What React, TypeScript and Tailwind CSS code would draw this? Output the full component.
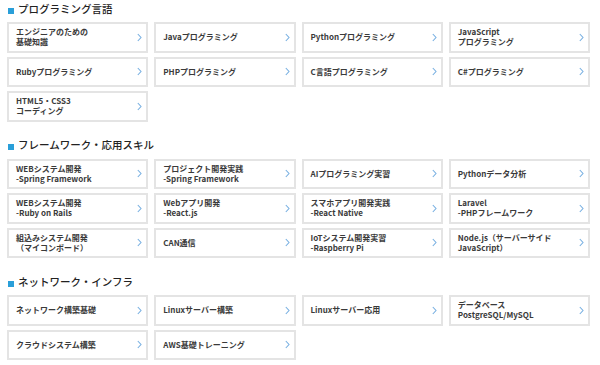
import React from "react";

type Section = { title: string; items: string[][] };

const sections: Section[] = [
  {
    title: "プログラミング言語",
    items: [
      ["エンジニアのための", "基礎知識"],
      ["Javaプログラミング"],
      ["Pythonプログラミング"],
      ["JavaScript", "プログラミング"],
      ["Rubyプログラミング"],
      ["PHPプログラミング"],
      ["C言語プログラミング"],
      ["C#プログラミング"],
      ["HTML5・CSS3", "コーディング"],
    ],
  },
  {
    title: "フレームワーク・応用スキル",
    items: [
      ["WEBシステム開発", "-Spring Framework"],
      ["プロジェクト開発実践", "-Spring Framework"],
      ["AIプログラミング実習"],
      ["Pythonデータ分析"],
      ["WEBシステム開発", "-Ruby on Rails"],
      ["Webアプリ開発", "-React.js"],
      ["スマホアプリ開発実践", "-React Native"],
      ["Laravel", "-PHPフレームワーク"],
      ["組込みシステム開発", "（マイコンボード）"],
      ["CAN通信"],
      ["IoTシステム開発実習", "-Raspberry Pi"],
      ["Node.js（サーバーサイド", "JavaScript）"],
    ],
  },
  {
    title: "ネットワーク・インフラ",
    items: [
      ["ネットワーク構築基礎"],
      ["Linuxサーバー構築"],
      ["Linuxサーバー応用"],
      ["データベース", "PostgreSQL/MySQL"],
      ["クラウドシステム構築"],
      ["AWS基礎トレーニング"],
    ],
  },
];

function Chevron() {
  return (
    <svg width="5" height="9" viewBox="0 0 5 9" className="shrink-0">
      <polyline points="0.8,1 4,4.5 0.8,8" fill="none" stroke="#78b0e2" strokeWidth="1.1" />
    </svg>
  );
}

export default function App() {
  return (
    <div
      className="w-[600px] h-[365px] overflow-hidden bg-white px-[7px]"
      style={{ fontFamily: '"Noto Sans CJK JP", "Noto Sans", sans-serif' }}
    >
      {sections.map((s, i) => (
        <div key={s.title} className={i === 0 ? "" : "mt-[15px]"}>
          <div className="h-[22px] flex items-center pl-[1px] pb-[5px]">
            <span className="w-[6px] h-[6px] bg-[#2a9fd9] mr-[4px] mt-[4px]" />
            <span className="text-[10.5px] leading-[14px] font-medium text-[#222]">{s.title}</span>
          </div>
          <div className="grid grid-cols-4 gap-x-[6px] gap-y-[4px] w-[583px]">
            {s.items.map((lines, j) => (
              <div
                key={j}
                className="h-[30.5px] border-2 border-[#e4e4e4] flex items-center justify-between pl-[7px] pr-[4px]"
              >
                <div className="text-[8px] leading-[10px] font-bold text-[#3a3a3a] whitespace-nowrap">
                  {lines.map((l, k) => (
                    <div key={k}>{l}</div>
                  ))}
                </div>
                <Chevron />
              </div>
            ))}
          </div>
        </div>
      ))}
    </div>
  );
}
